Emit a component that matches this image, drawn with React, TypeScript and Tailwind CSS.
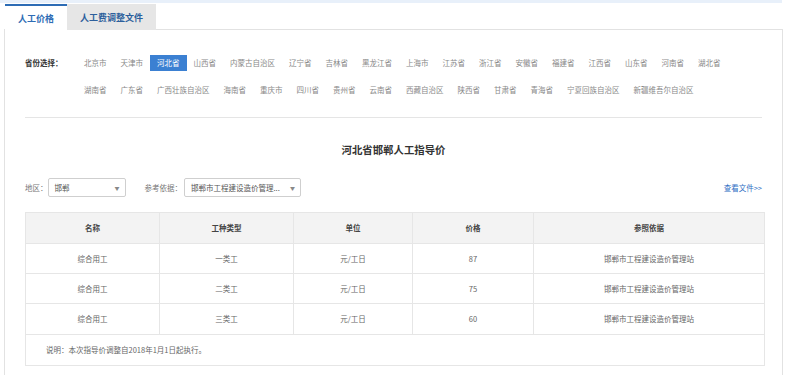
import React from "react";

const row1 = ["北京市", "天津市", "河北省", "山西省", "内蒙古自治区", "辽宁省", "吉林省", "黑龙江省", "上海市", "江苏省", "浙江省", "安徽省", "福建省", "江西省", "山东省", "河南省", "湖北省"];
const row2 = ["湖南省", "广东省", "广西壮族自治区", "海南省", "重庆市", "四川省", "贵州省", "云南省", "西藏自治区", "陕西省", "甘肃省", "青海省", "宁夏回族自治区", "新疆维吾尔自治区"];

const rows = [
  { name: "综合用工", type: "一类工", unit: "元/工日", price: "87", ref: "邯郸市工程建设造价管理站" },
  { name: "综合用工", type: "二类工", unit: "元/工日", price: "75", ref: "邯郸市工程建设造价管理站" },
  { name: "综合用工", type: "三类工", unit: "元/工日", price: "60", ref: "邯郸市工程建设造价管理站" },
];

const font = { fontFamily: '"Noto Sans CJK SC", "Noto Sans", sans-serif' };

const Province = ({ name }: { name: string }) => (
  <span
    className={`h-[16px] px-[7px] flex items-center whitespace-nowrap cursor-pointer ${
      name === "河北省" ? "bg-[#3b80d2] text-white" : "text-[#888]"
    }`}
  >
    {name}
  </span>
);

const Select = ({ text, width }: { text: string; width: string }) => (
  <div className={`${width} h-[19px] border border-[#cfcfcf] rounded-[2px] flex items-center justify-between pl-[6px] pr-[5px] text-[#555]`}>
    <span className="whitespace-nowrap">{text}</span>
    <span className="text-[5px] text-[#888]">▼</span>
  </div>
);

export default function App() {
  return (
    <div className="w-[800px] h-[375px] bg-white overflow-hidden text-[7.5px] leading-none" style={font}>
      <div className="h-[3px] w-[782px] bg-[#e8f0fa]" />
      <div className="flex ml-[5px] mt-[1px] h-[26px] relative z-10">
        <div className="w-[62px] bg-white border-t-2 border-[#2d6cb5] flex items-center justify-center text-[9px] font-bold text-[#2d6cb5]">
          人工价格
        </div>
        <div className="w-[89px] bg-[#e6e6e6] flex items-center justify-center text-[9px] font-bold text-[#2c5f9c]">
          人工费调整文件
        </div>
      </div>
      <div className="ml-[4px] w-[779px] h-[360px] -mt-px border border-[#e2e2e2] px-[20px] pt-[25px]">
        <div className="flex">
          <div className="w-[52px] h-[16px] flex items-center font-bold text-[#333]">省份选择：</div>
          <div className="flex flex-col gap-[11px]">
            <div className="flex">
              {row1.map((p) => (
                <Province key={p} name={p} />
              ))}
            </div>
            <div className="flex">
              {row2.map((p) => (
                <Province key={p} name={p} />
              ))}
            </div>
          </div>
        </div>
        <div className="mt-[19px] border-t border-[#e5e5e5]" />
        <div className="mt-[25px] h-[14px] flex items-center justify-center text-[10.4px] font-bold text-[#333]">
          河北省邯郸人工指导价
        </div>
        <div className="mt-[21px] flex items-center text-[#777]">
          <span>地区：</span>
          <Select text="邯郸" width="w-[78px]" />
          <span className="ml-[19px]">参考依据：</span>
          <div className="ml-[2px]">
            <Select text="邯郸市工程建设造价管理..." width="w-[117px]" />
          </div>
          <a className="ml-auto text-[#2f6fc4] cursor-pointer">查看文件&gt;&gt;</a>
        </div>
        <table className="mt-[15px] w-[739px] table-fixed border-collapse text-center">
          <colgroup>
            <col className="w-[134px]" />
            <col className="w-[134px]" />
            <col className="w-[119px]" />
            <col className="w-[121px]" />
            <col className="w-[231px]" />
          </colgroup>
          <thead>
            <tr className="h-[31px] bg-[#f3f3f3] text-[#444]">
              <th className="border border-[#e6e6e6] font-semibold">名称</th>
              <th className="border border-[#e6e6e6] font-semibold">工种类型</th>
              <th className="border border-[#e6e6e6] font-semibold">单位</th>
              <th className="border border-[#e6e6e6] font-semibold">价格</th>
              <th className="border border-[#e6e6e6] font-semibold">参照依据</th>
            </tr>
          </thead>
          <tbody className="text-[#666]">
            {rows.map((r, i) => (
              <tr key={i} className={i === 2 ? "h-[31px]" : "h-[30px]"}>
                <td className="border border-[#e6e6e6]">{r.name}</td>
                <td className="border border-[#e6e6e6]">{r.type}</td>
                <td className="border border-[#e6e6e6]">{r.unit}</td>
                <td className="border border-[#e6e6e6]">{r.price}</td>
                <td className="border border-[#e6e6e6]">{r.ref}</td>
              </tr>
            ))}
            <tr className="h-[31px]">
              <td colSpan={5} className="border border-[#e6e6e6] text-left pl-[20px]">
                说明：本次指导价调整自2018年1月1日起执行。
              </td>
            </tr>
          </tbody>
        </table>
      </div>
    </div>
  );
}
